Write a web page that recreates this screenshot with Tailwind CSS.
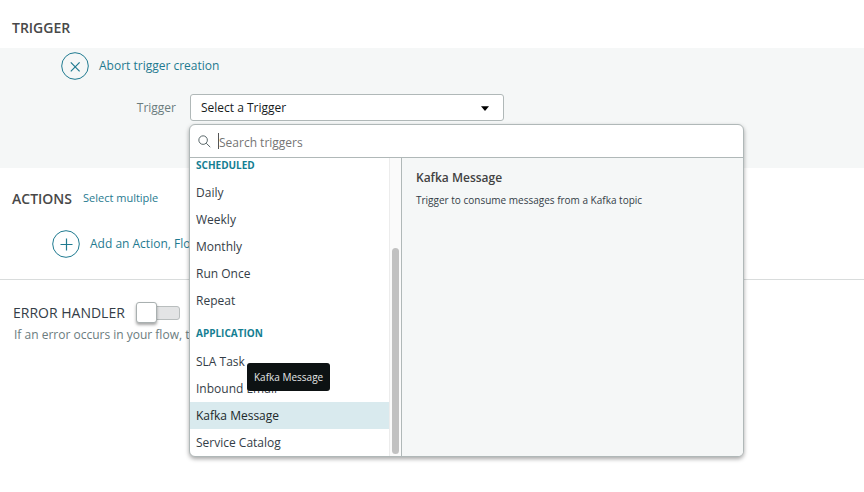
<!DOCTYPE html>
<html lang="en">
<head>
<meta charset="utf-8">
<meta name="viewport" content="width=device-width, initial-scale=1">
<title>Flow trigger</title>
<script src="https://cdn.jsdelivr.net/npm/@tailwindcss/browser@4"></script>
</head>
<body class="min-h-screen bg-white font-['Open_Sans',sans-serif] text-xs leading-5 text-[#343d47]">
<main>
  <header class="flex h-12 items-center px-3 pt-[7px]">
    <h1 class="text-sm leading-5 font-semibold text-[#484848]">TRIGGER</h1>
  </header>

  <section class="h-[120px] bg-[#f5f7f7] pt-1">
    <button type="button" class="ml-[61px] flex items-center gap-[10px] text-[#1f7a90]">
      <svg class="size-7" viewBox="0 0 28 28" fill="none" stroke="currentColor" aria-hidden="true"><circle cx="14" cy="14" r="13.3"/><path d="M9.800 10.300l8.800 9M18.600 10.300l-8.800 9" stroke-width="1.200"/></svg>
      <span>Abort trigger creation</span>
    </button>

    <div class="mt-[14px] flex items-center">
      <label for="trigger" class="w-[190px] pr-[14px] text-right text-[#6b7c7e]">Trigger</label>
      <div class="relative w-[314px]">
        <select id="trigger" class="block h-[27px] w-full appearance-none rounded-[3px] border border-[#b0b8b8] bg-white px-[10px] text-xs text-[#161b1c]">
          <option>Select a Trigger</option>
        </select>
        <svg class="pointer-events-none absolute top-3 right-[15px] h-[5px] w-2" viewBox="0 0 8 5" aria-hidden="true"><path d="M0 .3h8L4 5z" fill="#000"/></svg>

        <div class="absolute top-[30px] -left-px z-10 w-[555px] overflow-hidden rounded-md border border-[#b0b8b8] bg-white shadow-[0_2px_4px_rgba(0,0,0,0.35)]">
          <div class="flex h-[33px] items-center border-b border-[#b0b8b8] pl-2">
            <svg class="size-[13px]" viewBox="0 0 14 14" fill="none" stroke="#4d5c5e" aria-hidden="true"><circle cx="5.500" cy="5.500" r="4.600"/><path d="M8.900 8.900l4.300 4.200"/></svg>
            <span class="ml-[7px] h-4 w-px bg-[#555]"></span>
            <input type="text" aria-label="Search triggers" placeholder="Search triggers" class="min-w-0 flex-1 pt-1 text-xs outline-none placeholder:text-[#757575]">
          </div>
          <div class="flex">
            <div class="flex w-[211px]">
              <div class="flex-1">
                <h2 class="h-[21px] px-[6px] text-[10px] leading-[14px] font-bold text-[#147e92]">SCHEDULED</h2>
                <ul>
                  <li><button type="button" class="block h-[27px] w-full px-[6px] text-left">Daily</button></li>
                  <li><button type="button" class="block h-[27px] w-full px-[6px] text-left">Weekly</button></li>
                  <li><button type="button" class="block h-[27px] w-full px-[6px] text-left">Monthly</button></li>
                  <li><button type="button" class="block h-[27px] w-full px-[6px] text-left">Run Once</button></li>
                  <li><button type="button" class="block h-[27px] w-full px-[6px] text-left">Repeat</button></li>
                </ul>
                <h2 class="h-[34px] px-[6px] pt-3 text-[10px] leading-[14px] font-bold text-[#147e92]">APPLICATION</h2>
                <ul>
                  <li><button type="button" class="block h-[27px] w-full px-[6px] text-left">SLA Task</button></li>
                  <li><button type="button" class="block h-[27px] w-full px-[6px] text-left">Inbound Email</button></li>
                  <li class="relative">
                    <button type="button" aria-describedby="tip" class="block h-[27px] w-full bg-[#d9eaee] px-[6px] text-left text-[#20292b]">Kafka Message</button>
                    <div id="tip" role="tooltip" class="absolute bottom-[38px] left-[57px] flex h-7 items-center rounded-[3px] bg-[#0d1213] px-[7px] text-[10px] whitespace-nowrap text-[#e4e6e6]">Kafka Message</div>
                  </li>
                  <li><button type="button" class="block h-[27px] w-full px-[6px] text-left">Service Catalog</button></li>
                </ul>
              </div>
              <div class="flex w-3 items-end justify-center border-l border-[#ececec] bg-[#fafafa] pb-[2px]">
                <span class="h-[206px] w-[7px] rounded-full bg-[#c1c1c1]"></span>
              </div>
            </div>
            <div class="flex-1 border-l border-[#b0b8b8] bg-[#f5f7f7] px-[14px] pt-[10px]">
              <h2 class="font-semibold text-[#424242]">Kafka Message</h2>
              <p class="mt-[2px] text-[10px]">Trigger to consume messages from a Kafka topic</p>
            </div>
          </div>
        </div>
      </div>
    </div>
  </section>

  <section class="h-28 border-b border-[#d9dcdc] pt-5">
    <div class="flex items-center gap-[11px] px-3">
      <h2 class="text-sm leading-5 font-semibold text-[#484848]">ACTIONS</h2>
      <button type="button" class="pb-[2px] text-[11px] leading-5 text-[#1f7a90]">Select multiple</button>
    </div>
    <button type="button" class="mt-5 ml-[52px] flex items-center gap-[10px] text-[#1f7a90]">
      <svg class="size-7" viewBox="0 0 28 28" fill="none" stroke="currentColor" aria-hidden="true"><circle cx="14" cy="14" r="13.300"/><path d="M8.500 14.500h12M14.500 8.500v12" stroke-width="1.200"/></svg>
      <span>Add an Action, Flow Logic, or Subflow</span>
    </button>
  </section>

  <section class="px-[13px] pt-[21px]">
    <div class="flex items-center gap-[11px]">
      <label for="handler" class="text-sm leading-6">ERROR HANDLER</label>
      <span class="relative h-6 w-11">
        <input id="handler" type="checkbox" role="switch" class="absolute inset-x-0 top-[5px] block h-[14px] w-full appearance-none rounded-[3px] border border-[#b9bebe] bg-[#e3e4e5]">
        <span class="pointer-events-none absolute top-[1px] left-0 size-[21px] rounded-[3px] border border-[#a9b0b0] bg-white shadow-[0_2px_3px_rgba(0,0,0,0.35)]"></span>
      </span>
    </div>
    <p class="px-px text-[#6b7c7e]">If an error occurs in your flow, the actions you add here will run.</p>
  </section>
</main>
</body>
</html>
